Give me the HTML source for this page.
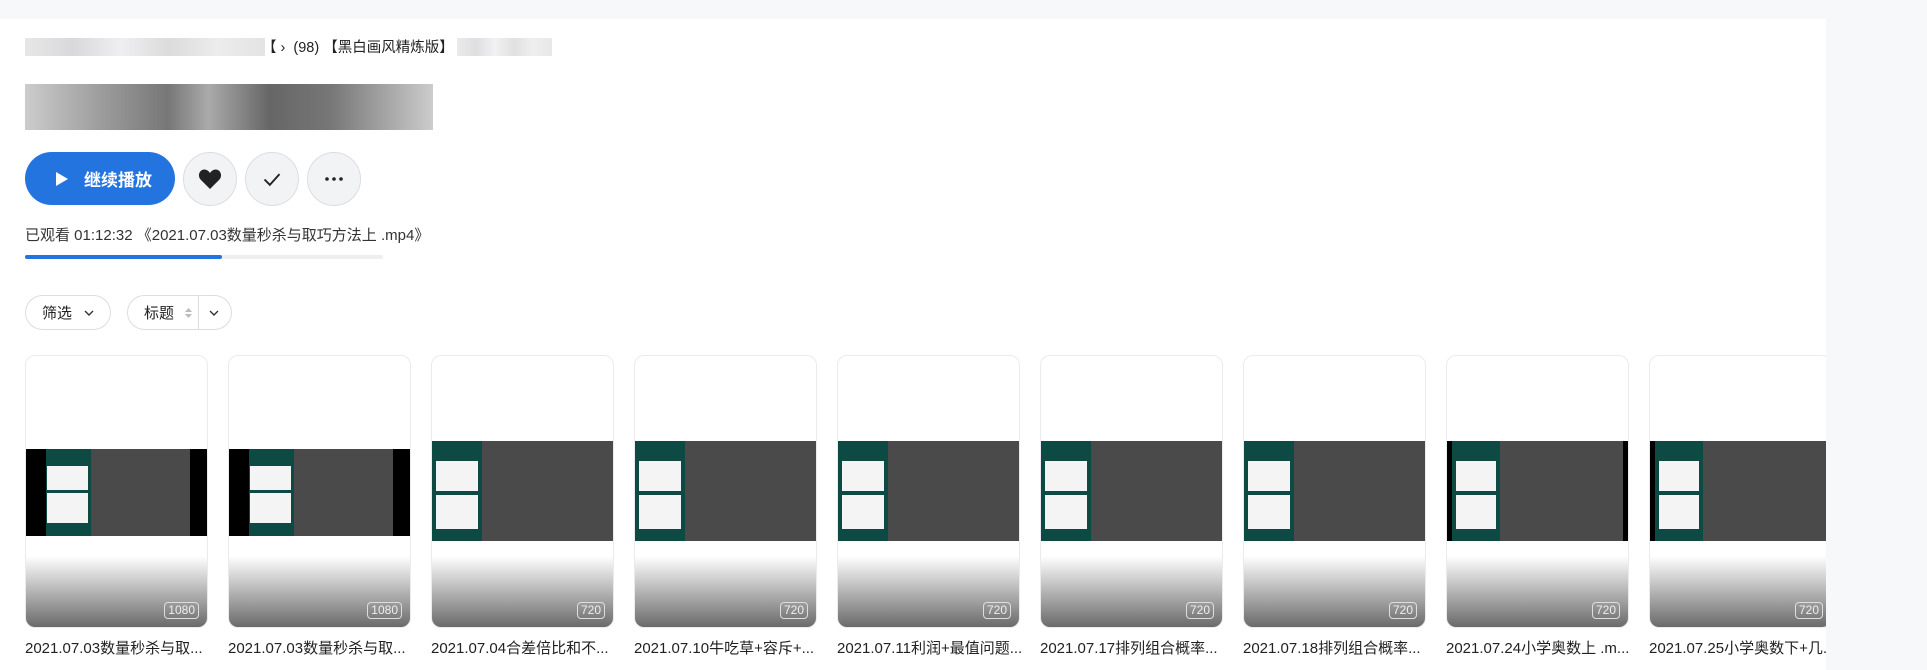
<!DOCTYPE html>
<html><head><meta charset="utf-8"><style>
*{margin:0;padding:0;box-sizing:border-box}
body{width:1927px;height:670px;overflow:hidden;background:#f7f8fa;font-family:"Liberation Sans","Noto Sans CJK SC",sans-serif;color:#222;position:relative}
.main{position:absolute;left:0;top:19px;width:1826px;height:651px;background:#fff;overflow:hidden}
.abs{position:absolute}
.blur{position:absolute;background:linear-gradient(90deg,#ddd,#c8c8cc 20%,#e8e8ec 40%,#ccc 60%,#e4e4e4 80%,#d8d8d8)}
.btn{position:absolute;left:25px;top:133px;width:150px;height:53px;border-radius:27px;background:#2474e0;color:#fff;font-size:17px;font-weight:bold;display:flex;align-items:center;padding-left:30px}
.circ{position:absolute;top:133px;width:54px;height:54px;border-radius:50%;background:#f2f3f5;border:1px solid #dcdde2;display:flex;align-items:center;justify-content:center}
.pill{position:absolute;top:276px;height:35px;border:1px solid #dcdde2;border-radius:18px;font-size:15px;display:flex;align-items:center}
.card{position:absolute;top:336px;width:183px;height:273px;border:1px solid #e8ebf0;border-radius:10px;overflow:hidden;background:linear-gradient(#fff 0,#fff 195px,#fff 200px,#666 273px)}
.img{position:absolute;left:0;width:100%;background:#4a4a4a}
.teal{position:absolute;background:#0d4a44}
.wp{position:absolute;background:#f4f4f4}
.q{position:absolute;right:8px;bottom:8px;border:1.5px solid #ddd;border-radius:4px;color:#eee;font-size:12px;padding:0 3px;line-height:15px}
.t{position:absolute;top:618px;font-size:15px;color:#222;white-space:nowrap}
</style></head><body>
<div class="main">
<div class="blur" style="left:25px;top:19px;width:240px;height:18px;opacity:.7"></div>
<div class="abs" style="left:262px;top:17px;font-size:14.5px;white-space:nowrap">【 ›&nbsp; (98) 【黑白画风精炼版】</div>
<div class="blur" style="left:457px;top:19px;width:95px;height:18px;opacity:.6"></div>
<div class="blur" style="left:25px;top:65px;width:408px;height:46px;background:linear-gradient(90deg,#ccc,#999 20%,#777 35%,#aaa 45%,#666 60%,#777 75%,#aaa 90%,#ccc)"></div>
<div class="btn"><svg width="14" height="16" viewBox="0 0 14 16"><path d="M1 1L13 8L1 15Z" fill="#fff"/></svg><span style="margin-left:15px">继续播放</span></div>
<div class="circ" style="left:183px"><svg width="24" height="22" viewBox="0 0 24 22"><path d="M12 21L2.5 11.5C-0.5 8 1 2 6 1.5C9 1.3 11 3.5 12 5C13 3.5 15 1.3 18 1.5C23 2 24.5 8 21.5 11.5Z" fill="#222"/></svg></div>
<div class="circ" style="left:245px"><svg width="20" height="15" viewBox="0 0 18 14"><path d="M2 7L7 12L16 2" stroke="#222" stroke-width="1.8" fill="none"/></svg></div>
<div class="circ" style="left:307px"><svg width="20" height="4"><circle cx="3" cy="2" r="1.8" fill="#222"/><circle cx="10" cy="2" r="1.8" fill="#222"/><circle cx="17" cy="2" r="1.8" fill="#222"/></svg></div>
<div class="abs" style="left:25px;top:205px;font-size:15px;color:#333;white-space:nowrap">已观看 01:12:32 《2021.07.03数量秒杀与取巧方法上 .mp4》</div>
<div class="abs" style="left:25px;top:236px;width:358px;height:4px;background:#eee;border-radius:2px"></div>
<div class="abs" style="left:25px;top:236px;width:197px;height:4px;background:#2474e0;border-radius:2px"></div>
<div class="pill" style="left:25px;width:86px;padding-left:16px">筛选<svg style="margin-left:12px" width="10" height="6"><path d="M1 1L5 5L9 1" stroke="#333" stroke-width="1.4" fill="none"/></svg></div>
<div class="pill" style="left:127px;width:105px;padding-left:16px">标题<svg style="margin-left:11px" width="7" height="12"><path d="M0 5L3.5 1L7 5ZM0 7L3.5 11L7 7Z" fill="#bbb"/></svg><span style="position:absolute;left:70px;top:0;height:33px;border-left:1px solid #dcdde2"></span><svg style="position:absolute;left:81px;top:14px" width="10" height="6"><path d="M1 1L5 5L9 1" stroke="#333" stroke-width="1.4" fill="none"/></svg></div>

<div class="card" style="left:25px"><div class="img" style="top:93px;height:87px;background:#000"><div class="teal" style="left:20px;top:0;width:45px;height:87px"></div><div class="abs" style="left:65px;top:0;width:99px;height:87px;background:#4a4a4a"></div><div class="wp" style="left:21px;top:17px;width:41px;height:24px"></div><div class="wp" style="left:21px;top:44px;width:41px;height:30px"></div></div><div class="q">1080</div></div>
<div class="card" style="left:228px"><div class="img" style="top:93px;height:87px;background:#000"><div class="teal" style="left:20px;top:0;width:45px;height:87px"></div><div class="abs" style="left:65px;top:0;width:99px;height:87px;background:#4a4a4a"></div><div class="wp" style="left:21px;top:17px;width:41px;height:24px"></div><div class="wp" style="left:21px;top:44px;width:41px;height:30px"></div></div><div class="q">1080</div></div>
<div class="card" style="left:431px"><div class="img" style="top:85px;height:100px"><div class="teal" style="left:0;top:0;width:50px;height:100px"></div><div class="wp" style="left:4px;top:20px;width:42px;height:30px"></div><div class="wp" style="left:4px;top:54px;width:42px;height:34px"></div></div><div class="q">720</div></div>
<div class="card" style="left:634px"><div class="img" style="top:85px;height:100px"><div class="teal" style="left:0;top:0;width:50px;height:100px"></div><div class="wp" style="left:4px;top:20px;width:42px;height:30px"></div><div class="wp" style="left:4px;top:54px;width:42px;height:34px"></div></div><div class="q">720</div></div>
<div class="card" style="left:837px"><div class="img" style="top:85px;height:100px"><div class="teal" style="left:0;top:0;width:50px;height:100px"></div><div class="wp" style="left:4px;top:20px;width:42px;height:30px"></div><div class="wp" style="left:4px;top:54px;width:42px;height:34px"></div></div><div class="q">720</div></div>
<div class="card" style="left:1040px"><div class="img" style="top:85px;height:100px"><div class="teal" style="left:0;top:0;width:50px;height:100px"></div><div class="wp" style="left:4px;top:20px;width:42px;height:30px"></div><div class="wp" style="left:4px;top:54px;width:42px;height:34px"></div></div><div class="q">720</div></div>
<div class="card" style="left:1243px"><div class="img" style="top:85px;height:100px"><div class="teal" style="left:0;top:0;width:50px;height:100px"></div><div class="wp" style="left:4px;top:20px;width:42px;height:30px"></div><div class="wp" style="left:4px;top:54px;width:42px;height:34px"></div></div><div class="q">720</div></div>
<div class="card" style="left:1446px"><div class="img" style="top:85px;height:100px;border-left:5px solid #000;border-right:5px solid #000"><div class="teal" style="left:0;top:0;width:48px;height:100px"></div><div class="wp" style="left:4px;top:20px;width:40px;height:30px"></div><div class="wp" style="left:4px;top:54px;width:40px;height:34px"></div></div><div class="q">720</div></div>
<div class="card" style="left:1649px"><div class="img" style="top:85px;height:100px;border-left:5px solid #000"><div class="teal" style="left:0;top:0;width:48px;height:100px"></div><div class="wp" style="left:4px;top:20px;width:40px;height:30px"></div><div class="wp" style="left:4px;top:54px;width:40px;height:34px"></div></div><div class="q">720</div></div>

<div class="t" style="left:25px">2021.07.03数量秒杀与取...</div>
<div class="t" style="left:228px">2021.07.03数量秒杀与取...</div>
<div class="t" style="left:431px">2021.07.04合差倍比和不...</div>
<div class="t" style="left:634px">2021.07.10牛吃草+容斥+...</div>
<div class="t" style="left:837px">2021.07.11利润+最值问题...</div>
<div class="t" style="left:1040px">2021.07.17排列组合概率...</div>
<div class="t" style="left:1243px">2021.07.18排列组合概率...</div>
<div class="t" style="left:1446px">2021.07.24小学奥数上 .m...</div>
<div class="t" style="left:1649px">2021.07.25小学奥数下+几...</div>
</div>
</body></html>
